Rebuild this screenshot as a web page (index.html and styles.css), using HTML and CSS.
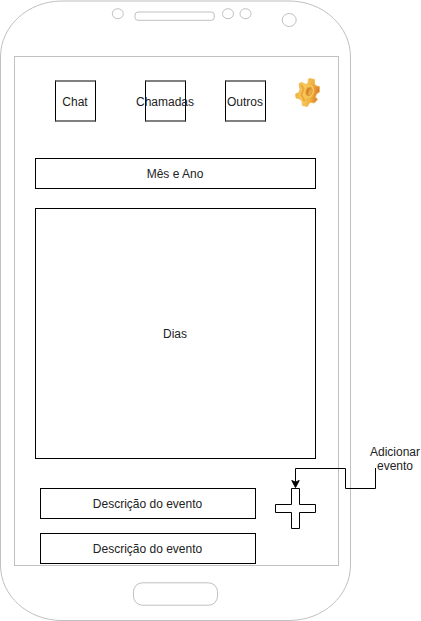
FILE: index.html
```html
<!DOCTYPE html>
<html lang="pt">
<head>
<meta charset="utf-8">
<title>Calendário</title>
<link rel="stylesheet" href="styles.css">
</head>
<body>
<div class="canvas">
  <svg class="phone" width="421" height="621" viewBox="0 0 421 621" aria-hidden="true">
    <g fill="none" stroke="#c0c0c0">
      <path d="M62 1C28 1 .5 26 .5 57V565C.5 596 28 620.5 62 620.5H289C323 620.5 350.5 596 350.5 565V57C350.5 26 323 1 289 1"/>
      <path d="M60 1H290" stroke="#dedede" stroke-width="2"/>
      <rect x="14.500" y="56.500" width="324" height="509"/>
      <ellipse cx="117.800" cy="13.700" rx="5.500" ry="5"/>
      <rect x="135" y="12" width="79.300" height="8.300" rx="3"/>
      <ellipse cx="228" cy="13.700" rx="5.500" ry="5"/>
      <ellipse cx="245.500" cy="13.700" rx="5.500" ry="5"/>
      <ellipse cx="289.200" cy="20" rx="7" ry="6.500"/>
      <rect x="133.500" y="582.800" width="84" height="22.400" rx="9"/>
    </g>
  </svg>
  <main class="screen">
    <nav class="tabs">
      <div class="tab"><span>Chat</span></div>
      <div class="tab"><span>Chamadas</span></div>
      <div class="tab"><span>Outros</span></div>
      <svg class="gear" width="27" height="31" viewBox="0 0 27 31" aria-hidden="true">
        <defs>
          <linearGradient id="gold" x1="0" y1=".2" x2="1" y2=".4">
            <stop offset="0" stop-color="#eba83c"/>
            <stop offset=".35" stop-color="#f9cc5a"/>
            <stop offset=".7" stop-color="#f0b03f"/>
            <stop offset="1" stop-color="#d9782f"/>
          </linearGradient>
        </defs>
        <path d="M5 6.500 8 5.500 12 7.500 14 6 14.500 2 16 1.500 20.500 2.500 20.500 7 22.500 9 25.500 9.500 25.500 15 22.500 17 21.500 20 23.500 22.500 20.500 26 16.500 25.500 14.500 27 13.500 29.500 8.500 28.500 8 24.500 6 22 2 21 1.500 17 5 15.500 6 12.500Z" fill="url(#gold)" stroke="#f0b955" stroke-width=".8" stroke-linejoin="round"/>
        <path d="M7.500 8 9.500 12 7.500 18 10.500 24" fill="none" stroke="#e29a32" stroke-width="2" opacity=".7"/>
        <ellipse cx="15" cy="14.500" rx="4.300" ry="5.700" transform="rotate(18 15 14.500)" fill="#e49c35" stroke="#f7c65a" stroke-width="1.500"/>
        <path d="M16 11.500C13.500 12 12.500 15 14 17.500" fill="none" stroke="#cd8025" stroke-width="1.400"/>
        <path d="M14.500 17.500C17 16.500 17 14 16.500 13" fill="none" stroke="#efb04c" stroke-width="1.500"/>
      </svg>
    </nav>
    <div class="box month"><span>Mês e Ano</span></div>
    <div class="box days"><span>Dias</span></div>
    <section class="events">
      <div class="list">
        <div class="box"><span>Descrição do evento</span></div>
        <div class="box"><span>Descrição do evento</span></div>
      </div>
      <svg class="plus" width="41" height="41" viewBox="0 0 41 41" aria-hidden="true">
        <path d="M.5 16.500H16.500V.5H24.500V16.500H40.500V24.500H24.500V40.500H16.500V24.500H.5Z" fill="#fff" stroke="#000"/>
      </svg>
    </section>
  </main>
  <svg class="arrow" width="90" height="30" viewBox="290 463 90 30" aria-hidden="true">
    <path d="M375.500 468V488.500H345.500V468.500H295.500V482" fill="none" stroke="#000"/>
    <path d="M295.500 487.500 291.800 480.500 295.500 482.200 299.200 480.500Z" stroke="#000"/>
  </svg>
  <div class="note">Adicionar<br>evento</div>
</div>
</body>
</html>
```
FILE: styles.css
```css
* { box-sizing: border-box; }
body {
  margin: 0;
  background: #fff;
  color: #222;
  font: 12px/14px "Liberation Sans", Arial, sans-serif;
}
.canvas {
  position: relative;
  width: 421px;
  height: 621px;
  overflow: hidden;
}
.phone { position: absolute; left: 0; top: 0; }
.screen {
  position: relative;
  width: 351px;
  padding: 80px 30px 0 35px;
}
.tabs {
  display: flex;
  height: 42px;
  margin-left: 20px;
}
.tab {
  display: flex;
  align-items: center;
  justify-content: center;
  width: 41px;
  height: 42px;
  border: solid #000;
  border-width: 2px 1px;
  border-top-color: #808080;
  border-bottom-color: #808080;
  white-space: nowrap;
  padding: 1px 1px 0 0;
}
.tab:nth-child(2) { margin: 0 39px 0 49px; }
.gear { margin: -3px 0 0 28px; flex: none; }
.box {
  display: flex;
  align-items: center;
  justify-content: center;
  height: 31px;
  padding: 1px 1px 0 0;
  border: 1px solid #000;
}
.month { width: 281px; margin-top: 36px; }
.days { width: 281px; height: 251px; margin-top: 19px; }
.events {
  display: flex;
  gap: 19px;
  margin: 29px 0 0 5px;
}
.list {
  display: grid;
  gap: 14px;
  width: 216px;
}
.plus { flex: none; }
.arrow { position: absolute; left: 290px; top: 463px; }
.note {
  position: absolute;
  left: 369px;
  top: 445px;
  width: 52px;
  text-align: center;
}
```
